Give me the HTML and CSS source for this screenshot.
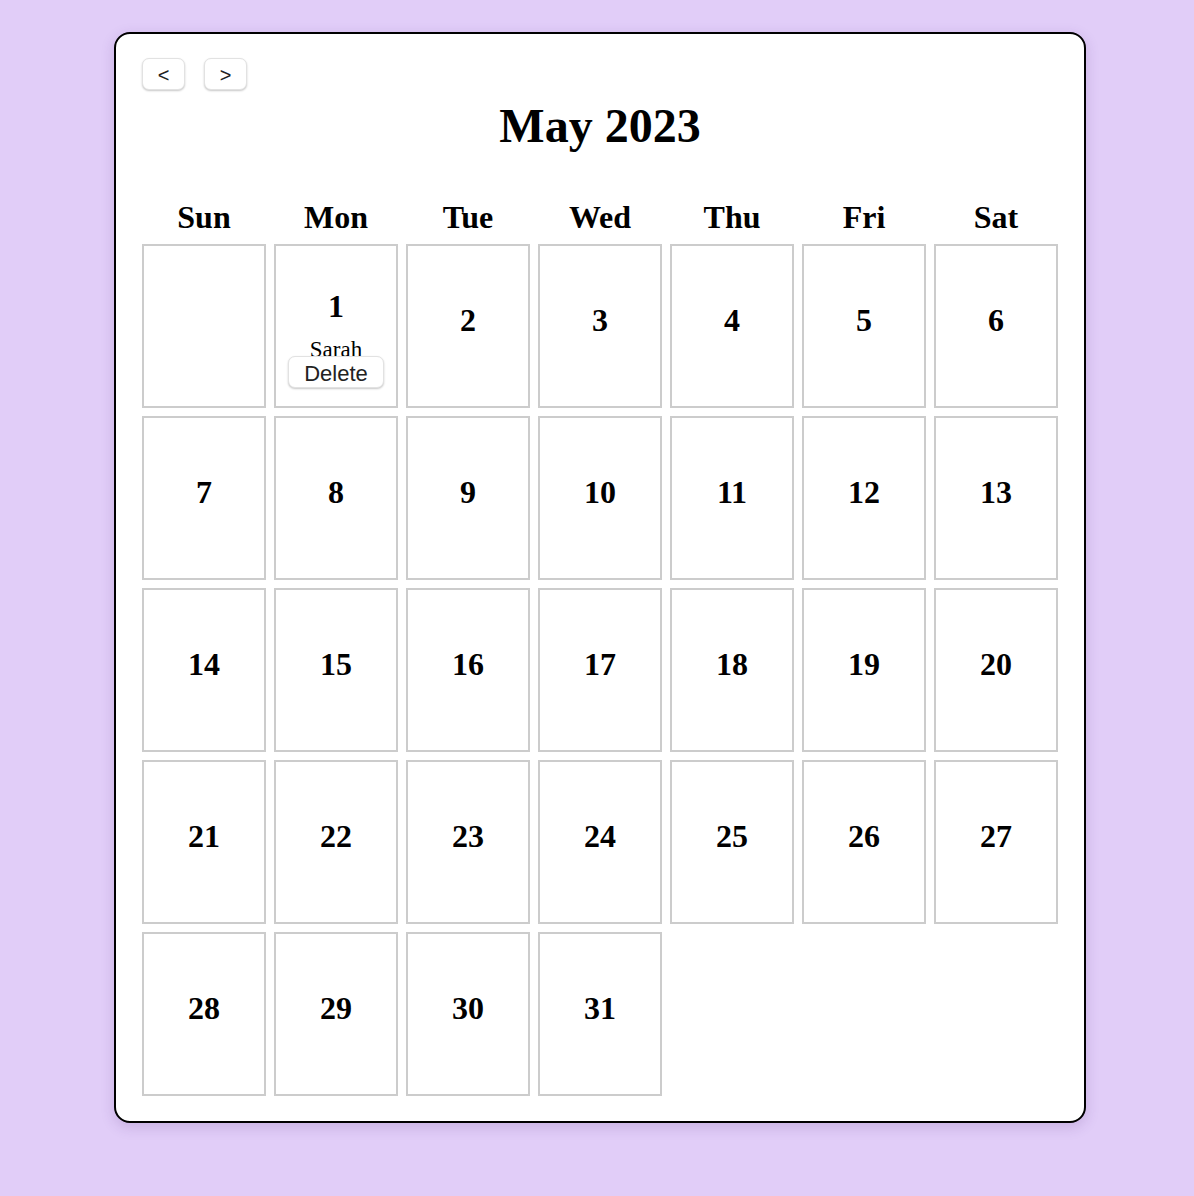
FILE: index.html
```html
<!DOCTYPE html>
<html lang="en">
<head>
  <meta charset="UTF-8" />
  <title>Calendar</title>
  <meta name="viewport" content="width=device-width, initial-scale=1.0">
  <link rel="stylesheet" href="styles.css">
</head>
<body>
  <div class="calendar">
    <div class="nav">
      <button class="nav-btn">&lt;</button>
      <button class="nav-btn">&gt;</button>
    </div>
    <h1 class="title">May 2023</h1>

    <div class="grid">
      <div class="weekday">Sun</div>
      <div class="weekday">Mon</div>
      <div class="weekday">Tue</div>
      <div class="weekday">Wed</div>
      <div class="weekday">Thu</div>
      <div class="weekday">Fri</div>
      <div class="weekday">Sat</div>

      <div class="day"></div>
      <div class="day">
        <div class="num">1</div>
        <div class="event">
          <span class="event-name">Sarah</span>
          <button class="delete-btn">Delete</button>
        </div>
      </div>
      <div class="day"><div class="num">2</div></div>
      <div class="day"><div class="num">3</div></div>
      <div class="day"><div class="num">4</div></div>
      <div class="day"><div class="num">5</div></div>
      <div class="day"><div class="num">6</div></div>

      <div class="day"><div class="num">7</div></div>
      <div class="day"><div class="num">8</div></div>
      <div class="day"><div class="num">9</div></div>
      <div class="day"><div class="num">10</div></div>
      <div class="day"><div class="num">11</div></div>
      <div class="day"><div class="num">12</div></div>
      <div class="day"><div class="num">13</div></div>

      <div class="day"><div class="num">14</div></div>
      <div class="day"><div class="num">15</div></div>
      <div class="day"><div class="num">16</div></div>
      <div class="day"><div class="num">17</div></div>
      <div class="day"><div class="num">18</div></div>
      <div class="day"><div class="num">19</div></div>
      <div class="day"><div class="num">20</div></div>

      <div class="day"><div class="num">21</div></div>
      <div class="day"><div class="num">22</div></div>
      <div class="day"><div class="num">23</div></div>
      <div class="day"><div class="num">24</div></div>
      <div class="day"><div class="num">25</div></div>
      <div class="day"><div class="num">26</div></div>
      <div class="day"><div class="num">27</div></div>

      <div class="day"><div class="num">28</div></div>
      <div class="day"><div class="num">29</div></div>
      <div class="day"><div class="num">30</div></div>
      <div class="day"><div class="num">31</div></div>
    </div>
  </div>
</body>
</html>
```

FILE: styles.css
```css
body {
  background: #e1cdf8;
  margin: 0;
  padding: 32px 0 40px 6px;
  display: flex;
  justify-content: center;
  font-family: "Liberation Serif", "Times New Roman", serif;
  color: #000;
}
.calendar {
  box-sizing: border-box;
  width: 972px;
  background: #fff;
  border: 2px solid #000;
  border-radius: 16px;
  padding: 24px 26px 25px;
  box-shadow: 0 4px 14px rgba(80, 40, 120, 0.18);
}
.nav {
  display: flex;
  gap: 19px;
  height: 32px;
}
.nav-btn, .delete-btn {
  box-sizing: border-box;
  background: #fff;
  border: 1px solid #e2e2e2;
  border-radius: 7px;
  box-shadow: 0 1px 2px rgba(0, 0, 0, 0.22);
  color: #222;
  font-family: "Liberation Sans", Arial, sans-serif;
  padding: 3px 0 0;
  cursor: pointer;
}
.nav-btn {
  width: 43px;
  height: 32px;
  font-size: 20px;
}
.title {
  text-align: center;
  font-size: 48px;
  line-height: 56px;
  font-weight: bold;
  margin: 8px 0 44px;
}
.grid {
  display: grid;
  grid-template-columns: repeat(7, 1fr);
  gap: 8px;
}
.weekday {
  text-align: center;
  font-size: 32px;
  font-weight: bold;
  line-height: 38px;
}
.day {
  box-sizing: border-box;
  height: 164px;
  border: 2px solid #ccc;
  display: flex;
  flex-direction: column;
  align-items: center;
  justify-content: center;
}
.num {
  font-size: 32px;
  font-weight: bold;
  line-height: 36px;
  margin-bottom: 12px;
}
.event {
  position: relative;
  height: 28px;
  margin-top: -12px;
  padding-top: 12px;
  text-align: center;
  width: 100%;
}
.event-name {
  font-family: "Liberation Serif", "Times New Roman", serif;
  font-size: 23px;
  line-height: 28px;
}
.delete-btn {
  position: absolute;
  top: 32px;
  left: 50%;
  transform: translateX(-50%);
  width: 96px;
  height: 32px;
  font-size: 22px;
}
```
